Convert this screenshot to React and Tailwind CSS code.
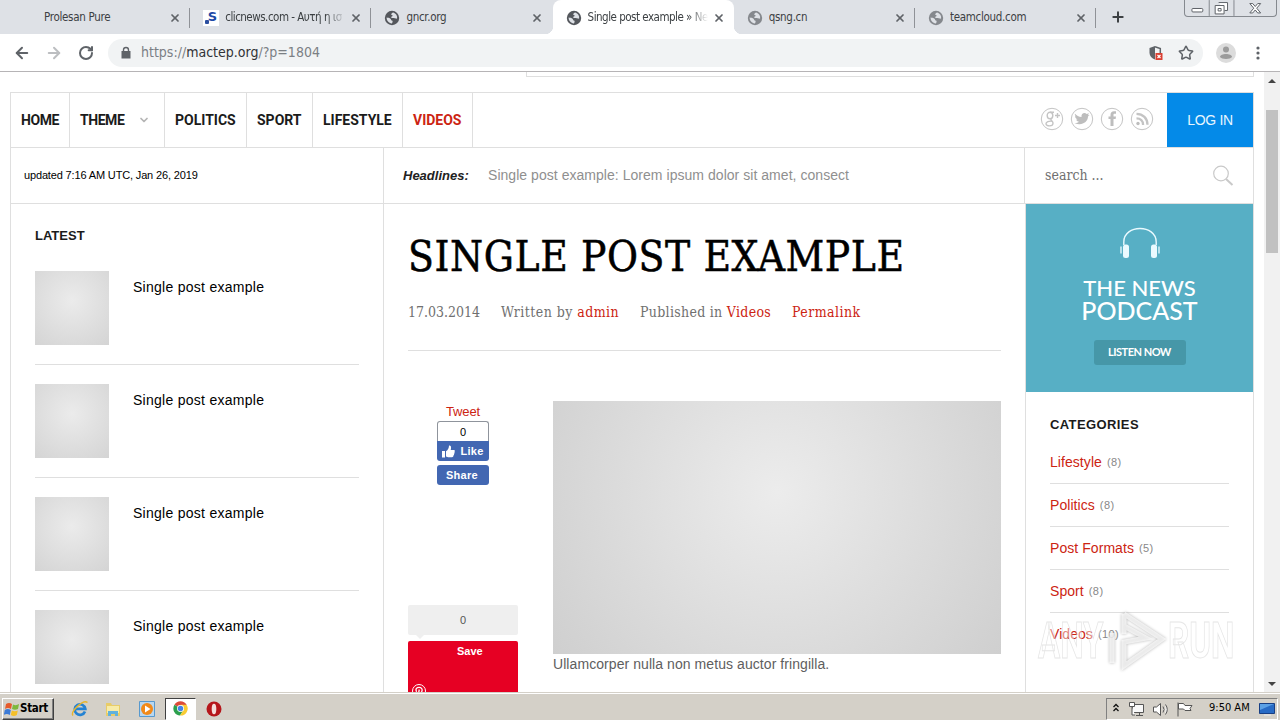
import React from 'react';
import { ArrowLeft, ArrowRight, RotateCw, Star, Plus, X, ChevronDown } from 'lucide-react';

const tabs = [
  { title: 'Prolesan Pure', icon: null },
  { title: 'clicnews.com - Αυτή η ισ', icon: 'letter', fade: true },
  { title: 'gncr.org', icon: 'globe' },
  { title: 'Single post example » Ne', icon: 'globe', active: true, fade: true },
  { title: 'qsng.cn', icon: 'globe', dim: true },
  { title: 'teamcloud.com', icon: 'globe', dim: true },
];

const navItems = [
  { label: 'HOME', width: 'w-[59px]', tight: true },
  { label: 'THEME', width: 'w-[95px]', menu: true, tight: true },
  { label: 'POLITICS', width: 'w-[82px]' },
  { label: 'SPORT', width: 'w-[66px]' },
  { label: 'LIFESTYLE', width: 'w-[90px]' },
  { label: 'VIDEOS', width: 'w-[70px]', active: true },
];

const categories = [
  { name: 'Lifestyle', count: 8 },
  { name: 'Politics', count: 8 },
  { name: 'Post Formats', count: 5 },
  { name: 'Sport', count: 8 },
  { name: 'Videos', count: 10 },
];

const Globe = ({ dim }) => (
  <svg viewBox="0 0 16 16" className={`size-4 shrink-0 ${dim ? 'text-[#85888d]' : 'text-[#54575c]'}`}>
    <circle cx="8" cy="8" r="7.2" fill="currentColor" />
    <path d="M2.6 7.6c1.5.2 3 .3 3.900 1.200.8.8.2 1.500 1.300 1.700 1.200.2 1 1.700.1 2.900-3 .1-5.300-2.600-5.300-5.800zM9.300 2.600c-1.200.4-2 .9-1.900 1.800.1.700 1.200.5 1.200 1.300 0 .9-1.500.6-1.500 1.500 0 .8 1.700.7 2.900.8 1.300.1 1.500 1 3.100.6.500-2.800-1.200-5.200-3.800-6z" fill="#dee1e6" />
  </svg>
);

const SiteIcon = ({ tab }) => {
  if (tab.icon === 'globe') return <Globe dim={tab.dim} />;
  if (tab.icon === 'letter') {
    return (
      <span className="flex size-4 shrink-0 items-start justify-end bg-white bg-[radial-gradient(circle_at_4px_12px,#2c4fa0_2px,transparent_2.500px)] pr-0.5 font-['DejaVu_Sans'] text-[13px] leading-[13px] font-bold text-[#1d49a6]">
        S
      </span>
    );
  }
  return <span className="size-4 shrink-0" />;
};

const TabStrip = () => (
  <div className="flex h-[34px] bg-[#dee1e6] pl-[9px] font-['DejaVu_Sans_Condensed','DejaVu_Sans',sans-serif] text-[11.500px] text-[#3c4043]">
    {tabs.map((tab, index) => (
      <div
        key={tab.title}
        className={`relative flex w-[181.200px] shrink-0 items-center pt-0.5 pl-[13px] ${tab.active ? 'rounded-t-lg bg-white' : ''}`}
      >
        {tab.active && (
          <>
            <span className="absolute bottom-0 -left-2 size-2 bg-[radial-gradient(circle_at_0_0,transparent_8px,white_8.500px)]" />
            <span className="absolute -right-2 bottom-0 size-2 bg-[radial-gradient(circle_at_100%_0,transparent_8px,white_8.500px)]" />
          </>
        )}
        <SiteIcon tab={tab} />
        <span
          className={`ml-1.5 w-[120px] overflow-hidden whitespace-nowrap ${
            tab.fade ? 'tracking-[-0.500px] [mask-image:linear-gradient(to_right,black_84%,transparent)]' : 'tracking-[-0.300px]'
          }`}
        >
          {tab.title}
        </span>
        <X className="ml-[5px] size-3 text-[#5f6368]" strokeWidth={3.5} />
        {index !== 2 && index !== 3 && <span className="ml-auto h-5 w-px bg-[#8f9297]" />}
      </div>
    ))}
    <Plus className="mt-[9px] ml-[14px] size-4 text-[#3c4043]" strokeWidth={3} />
    <div className="ml-auto mr-[3px] flex h-[17px] w-[93px] rounded-b-sm border border-t-0 border-[#85898f]">
      <svg viewBox="0 0 92 16" className="h-4 w-[92px]" fill="none" stroke="#5d6167">
        <path d="M24.500 0v16M49.500 0v16" stroke="#85898f" />
        <rect x="7" y="8.500" width="11" height="3.500" rx="1" fill="#fff" />
        <path d="M34 2.500h9v8h-3M30.500 5.500h9v8.500h-9zM33.500 8.500h3v2.500h-3z" fill="#fff" />
        <path d="M65.500 3.500h3l2.500 3 2.500-3h3l-4 4.700 4 4.800h-3l-2.500-3-2.500 3h-3l4-4.800z" fill="#fff" />
      </svg>
    </div>
  </div>
);

const Toolbar = () => (
  <div className="flex h-[38px] items-center border-b border-[#b6b4b6] bg-white pl-[13px]">
    <ArrowLeft className="size-[18px] text-[#5f6368]" strokeWidth={2.6} />
    <ArrowRight className="ml-[14px] size-[18px] text-[#bcbec1]" strokeWidth={2.6} />
    <RotateCw className="ml-[15px] size-4 text-[#5f6368]" strokeWidth={3} />
    <div className="ml-[14px] flex h-7 w-[1095px] items-center rounded-full bg-[#f1f3f4] pl-3">
      <svg viewBox="0 0 12 14" className="h-3.5 w-3" fill="none">
        <path d="M1.500 5h9v7.500h-9z" fill="#5f6368" />
        <path d="M3.500 5.500V4a2.500 2.500 0 0 1 5 0v1.500" stroke="#5f6368" strokeWidth="1.400" />
      </svg>
      <span className="ml-[9px] font-['DejaVu_Sans_Condensed','DejaVu_Sans',sans-serif] text-[14px] font-light text-[#7b7f84]">
        https://<span className="text-[#303236]">mactep.org</span>/?p=1804
      </span>
      <svg viewBox="0 0 16 16" className="ml-auto size-4">
        <path d="M7 1 1.500 3v4.500C1.500 11 4 13.500 7 14.500z" fill="#5f6368" />
        <path d="M7 1.700 12.300 3.500v5" fill="none" stroke="#5f6368" strokeWidth="1.500" />
        <path d="M7.500 8h7v7h-7z" fill="#d93f32" />
        <path d="m9.500 10 3 3m0-3-3 3" stroke="#fff" strokeWidth="1.200" />
      </svg>
      <Star className="mr-[9px] ml-[14px] size-4 text-[#5f6368]" strokeWidth={2.3} />
    </div>
    <svg viewBox="0 0 20 20" className="ml-[13px] size-5">
      <circle cx="10" cy="10" r="10" fill="#dcdcdc" />
      <circle cx="10" cy="6.500" r="3" fill="#9b9b9b" />
      <path d="M4 14c0-4 12-4 12 0-1.500 2.600-10.500 2.600-12 0z" fill="#9b9b9b" />
    </svg>
    <svg viewBox="0 0 4 16" className="ml-5 h-4 w-1" fill="#5f6368">
      <circle cx="2" cy="3" r="1.600" />
      <circle cx="2" cy="8" r="1.600" />
      <circle cx="2" cy="13" r="1.600" />
    </svg>
  </div>
);

const SocialIcon = ({ children }) => (
  <svg viewBox="0 0 24 24" className="size-6" fill="none" stroke="#c4c4c4">
    <circle cx="12" cy="12" r="10.700" />
    {children}
  </svg>
);

const SocialLinks = () => (
  <div className="ml-auto flex items-center gap-1.5 pr-[13px] pb-0.5">
    <SocialIcon>
      <ellipse cx="10" cy="8.500" rx="2.800" ry="3.300" strokeWidth="1.400" />
      <path d="M10 5.200h4M12 11c-3 2 1 2.500 1 5 0 4-7 3.500-7 .8 0-2.300 3-2.800 5.500-2.600M15 8.500h5M17.500 6v5" strokeWidth="1.400" />
    </SocialIcon>
    <SocialIcon>
      <path
        d="M5 6.800c1.700 2 3.800 3 6.500 3.200-.5-3.600 3.200-5 5.200-2.900l2.300-.8-1.100 1.900 1.700-.3-1.600 1.700c0 5.800-6.600 9.600-13.500 6.400 2 .1 3.400-.4 4.600-1.300-1.600-.2-2.500-1-2.900-2.300h1.300C6 11.700 5 10.600 5 9l1.300.4C5 8.600 4.600 7.800 5 6.800z"
        fill="#bdbdbd"
        stroke="none"
      />
    </SocialIcon>
    <SocialIcon>
      <path d="M10.500 19v-7H8.500V9.500h2V8c0-2.600 1.300-3.800 3.500-3.800h2v2.600h-1.300c-1 0-1.200.5-1.200 1.300v1.400H16l-.4 2.500h-2.100v7z" fill="#bdbdbd" stroke="none" />
    </SocialIcon>
    <SocialIcon>
      <circle cx="8" cy="16.500" r="1.700" fill="#bdbdbd" stroke="none" />
      <path d="M6.500 11.300c4 0 6.600 2.700 6.600 6.700M6.500 6.800c6.500 0 11 4.500 11 11" strokeWidth="2.300" />
    </SocialIcon>
  </div>
);

const NavBar = () => (
  <div className="flex h-[55px] border-b border-[#dfdfdf] font-['Liberation_Sans',Arial,sans-serif]">
    {navItems.map((item) => (
      <div
        key={item.label}
        className={`flex items-center border-r border-[#dfdfdf] pl-2.5 font-['Roboto',sans-serif] text-[14px] font-bold ${item.width} ${
          item.tight ? 'tracking-[-0.450px]' : ''
        } ${item.active ? 'text-[#cc2412]' : 'text-[#1b1b1b]'}`}
      >
        {item.label}
        {item.menu && <ChevronDown className="ml-[14px] size-3 text-[#b5b5b5]" strokeWidth={3.5} />}
      </div>
    ))}
    <SocialLinks />
    <div className="flex h-[54px] w-[86px] items-center justify-center bg-[#048ae8] text-[14px] tracking-[-0.300px] text-[#e8f6ff]">LOG IN</div>
  </div>
);

const InfoBar = () => (
  <div className="flex h-14 items-center border-b border-[#dfdfdf] font-['Liberation_Sans',Arial,sans-serif]">
    <div className="flex h-full w-[373px] items-center border-r border-[#dfdfdf] pl-[13px] text-[11px] tracking-[-0.150px] text-black">
      updated 7:16 AM UTC, Jan 26, 2019
    </div>
    <div className="flex h-full w-[641px] items-center border-r border-[#dfdfdf] pl-[19px] text-[14px] text-[#8f8f8f]">
      <span className="w-[85px] text-[13px] font-bold text-[#222] italic">Headlines:</span>
      <span className="tracking-[0.040px]">Single post example: Lorem ipsum dolor sit amet, consect</span>
    </div>
    <div className="flex flex-1 items-center justify-between pr-[19px] pl-5 font-['DejaVu_Serif_Condensed','DejaVu_Serif',serif] text-[14px] text-[#707070]">
      search ...
      <svg viewBox="0 0 22 22" className="size-[22px]" fill="none" stroke="#c9c9c9">
        <circle cx="9" cy="8.500" r="7.300" strokeWidth="1.200" />
        <path d="m14 14 6.500 6" strokeWidth="2" />
      </svg>
    </div>
  </div>
);

const LatestPosts = () => (
  <aside className="w-[373px] shrink-0 border-r border-[#dfdfdf] px-6 pt-6 font-['Liberation_Sans',Arial,sans-serif]">
    <h3 className="h-[43px] text-[13px] leading-4 font-bold text-[#1b1b1b]">LATEST</h3>
    {[0, 1, 2, 3].map((i) => (
      <div key={i} className="mb-[19px] flex h-[94px] border-b border-[#dfdfdf]">
        <div className="size-[74px] bg-[radial-gradient(circle_at_50%_40%,#ebebeb,#d4d4d4)]" />
        <span className="ml-6 pt-1.5 text-[14px] leading-5 tracking-[0.270px] text-black">Single post example</span>
      </div>
    ))}
  </aside>
);

const ShareButtons = () => (
  <div className="flex w-[110px] flex-col items-center">
    <span className="h-5 pt-px text-[13px] leading-5 tracking-[-0.150px] text-[#cc2412]">Tweet</span>
    <div className="flex h-5 w-[52px] items-center justify-center rounded-t-[3px] border border-b-0 border-[#8f949c] pt-px text-[11px] text-black">
      0
    </div>
    <div className="flex h-5 w-[52px] items-center justify-center gap-[5px] rounded-b-[3px] bg-[#4267b2] text-[11px] font-bold tracking-[0.300px] text-white">
      <svg viewBox="0 0 13 13" className="size-[13px]" fill="#fff">
        <path d="M0 6h3v6.500H0zM4 6.200C6 5 7 3 7 .5c2-.3 2.500 1.500 1.700 4.500h3c1.300 0 1.500 1.300.7 2 .5.700.3 1.500-.4 1.900.3.700 0 1.300-.6 1.600.2 1-.4 1.700-1.400 1.700H7c-1.300 0-2-.4-3-.7z" />
      </svg>
      Like
    </div>
    <div className="mt-1 flex h-5 w-[52px] items-center justify-center rounded-[3px] bg-[#4267b2] pt-px pr-0.5 text-[11px] font-bold tracking-[0.300px] text-white">
      Share
    </div>
    <div className="relative mt-[120px] flex h-[30px] w-full items-center justify-center rounded-xs bg-[#efefef] text-[11px] text-[#555]">
      0
      <span className="absolute top-full left-2 border-x-[4px] border-t-[4px] border-x-transparent border-t-[#efefef]" />
    </div>
    <div className="mt-1.5 flex h-[62px] w-full flex-col justify-between rounded-xs bg-[#e60023] pt-1 pl-[3px] text-[11px] leading-3 font-bold text-white">
      <span className="pl-[46px]">Save</span>
      <svg viewBox="0 0 16 16" className="mb-[4px] size-4 shrink-0" fill="none" stroke="#fff">
        <circle cx="8" cy="8" r="6.500" />
        <path d="M5.600 8.800C4 5.800 6 4.300 8 4.300c2.300 0 3.500 1.500 3 3.500-.5 2.300-2.800 2.400-3.200 1M8.300 6.500 6.900 13" strokeWidth="1.300" />
      </svg>
    </div>
  </div>
);

const Post = () => (
  <article className="w-[642px] shrink-0 border-r border-[#dfdfdf] px-6 pt-[27px]">
    <h1 className="h-[50px] font-['DejaVu_Serif_Condensed','DejaVu_Serif',serif] text-[42px] leading-[51px] tracking-[0.600px] whitespace-nowrap text-black [-webkit-text-stroke:0.500px_black]">
      SINGLE POST EXAMPLE
    </h1>
    <div className="flex h-[70px] border-b border-[#dfdfdf] pt-[21px] font-['DejaVu_Serif_Condensed','DejaVu_Serif',serif] text-[14px] leading-5 tracking-[0.450px] whitespace-nowrap text-[#707070]">
      <span className="w-[93px] tracking-normal">17.03.2014</span>
      <span className="w-[139px]">
        Written by <span className="text-[#cc2412]">admin</span>
      </span>
      <span className="w-[152px] tracking-[0.300px]">
        Published in <span className="text-[#cc2412]">Videos</span>
      </span>
      <span className="text-[#cc2412]">Permalink</span>
    </div>
    <div className="flex pt-[50px] font-['Liberation_Sans',Arial,sans-serif]">
      <ShareButtons />
      <div className="ml-[35px] w-[448px]">
        <div className="h-[253px] bg-[radial-gradient(circle_at_50%_36%,#ececec,#cfcfcf)]" />
        <p className="text-[14px] leading-5 tracking-[0.070px] text-[#5e5e5e]">Ullamcorper nulla non metus auctor fringilla.</p>
      </div>
    </div>
  </article>
);

const Podcast = () => (
  <div className="flex h-[188px] flex-col items-center bg-[#57afc5] pt-[23px] font-['Lato',sans-serif] text-white">
    <svg viewBox="0 0 40 32" className="h-8 w-10" fill="none" stroke="#eafaff">
      <path d="M3.800 18V15C3.800-3 36.200-3 36.200 15v3" strokeWidth="1.400" />
      <path d="M1 19.500v7M39 19.500v7" strokeWidth="1.300" />
      <rect x="3" y="17.500" width="6" height="13.500" rx="2.500" fill="#eafaff" stroke="none" />
      <rect x="31" y="17.500" width="6" height="13.500" rx="2.500" fill="#eafaff" stroke="none" />
    </svg>
    <span className="mt-[18px] text-[22px] leading-[22px] font-medium whitespace-nowrap">THE NEWS</span>
    <span className="text-[25px] leading-[22px] font-medium whitespace-nowrap">PODCAST</span>
    <span className="mt-[19px] flex h-[25px] w-[92px] items-center justify-center rounded-[3px] bg-[#4697a8] text-[11px] font-bold tracking-[-0.500px]">
      LISTEN NOW
    </span>
  </div>
);

const Sidebar = () => (
  <aside className="min-w-0 flex-1 font-['Liberation_Sans',Arial,sans-serif]">
    <Podcast />
    <div className="px-6 pt-[25px]">
      <h3 className="h-6 text-[13px] leading-4 font-bold tracking-[0.400px] text-[#1b1b1b]">CATEGORIES</h3>
      {categories.map((category) => (
        <div key={category.name} className="flex h-[43px] items-center border-b border-[#dfdfdf] text-[14px] tracking-[0.060px] text-[#cc2412] last:border-0">
          {category.name}
          <span className="ml-[5px] text-[11px] tracking-[0.400px] text-[#888]">({category.count})</span>
        </div>
      ))}
    </div>
  </aside>
);

const Watermark = () => (
  <div className="absolute top-[537px] left-[1038px] flex items-center font-['Roboto',sans-serif] text-[50px] leading-[64px] font-bold text-white/45 [-webkit-text-stroke:1px_rgba(190,190,190,0.4)]">
    <span className="w-[66px] origin-left scale-x-[0.660]">ANY</span>
    <svg viewBox="0 0 64 64" className="h-16 w-16 [filter:drop-shadow(0_0_1.500px_#999)]" fill="none" stroke="#fff" strokeOpacity="0.7" strokeWidth="5">
      <path d="M8 24v30M20 5v20M20 5l38 25-38 27V33l22-4-22-12" />
    </svg>
    <span className="w-[66px] origin-left scale-x-[0.660]">RUN</span>
  </div>
);

const ScrollBar = () => (
  <div className="flex w-4 flex-col items-center justify-between bg-[#f1f1f1] pt-[7px] pb-1.5">
    <span className="border-x-4 border-b-4 border-x-transparent border-b-[#444]" />
    <span className="mt-[27px] mb-auto h-[143px] w-3 bg-[#c1c1c1]" />
    <span className="border-x-4 border-t-4 border-x-transparent border-t-[#444]" />
  </div>
);

const TaskBar = () => (
  <div className="flex h-7 items-center border-t border-[#d4d0c8] bg-[#d4d0c8] pl-0.5 shadow-[inset_0_1px_0_#fff] font-['DejaVu_Sans_Condensed','DejaVu_Sans',sans-serif]">
    <div className="mt-1 flex h-[22px] w-[52px] items-center border border-t-white border-r-[#404040] border-b-[#404040] border-l-white pl-px text-[11.500px] font-bold text-black shadow-[inset_-1px_-1px_0_#808080]">
      <svg viewBox="0 0 16 16" className="size-4 shrink-0">
        <path d="M2 3q3-2 6 0L7 8Q4 6 1 8z" fill="#e65a2b" />
        <path d="M9 3.500q3 1.500 6-.5l-1 5q-3 1.500-6 0z" fill="#7db83c" />
        <path d="M.8 9q3-2 6 0l-1 5q-3-2-6 0z" fill="#3d7bd6" />
        <path d="M7.800 9.500q3 1.500 6 0l-1 4.500q-3 2-6 0z" fill="#f4bf29" />
      </svg>
      <span className="tracking-[-0.300px]">Start</span>
    </div>
    <div className="mt-1 ml-[17px] flex items-center">
      <svg viewBox="0 0 18 18" className="size-[18px]" fill="none">
        <path d="M14 11.500a5.300 5.300 0 1 1 .3-2.700H5" stroke="#2583d3" strokeWidth="2.700" />
        <path d="M2 15.500C-1 12 12-1 16.500 2.500" stroke="#e7b52c" strokeWidth="1.400" />
      </svg>
      <svg viewBox="0 0 18 18" className="ml-[15px] size-[18px]">
        <path d="M2 3h5l1 2h8v11H2z" fill="#e8cc68" />
        <path d="M3 6h12v7H3z" fill="#f7eba8" />
        <path d="M4 16v-5h10v5h-3v-2H7v2z" fill="#60b1dc" />
      </svg>
      <svg viewBox="0 0 18 18" className="ml-4 size-[18px]">
        <path d="M1.500 1.500h15v15h-15z" fill="#b8d7f0" stroke="#5799ce" />
        <circle cx="9" cy="9" r="6" fill="#f28a19" />
        <path d="m7 5.500 5.500 3.500L7 12.500z" fill="#fff" />
      </svg>
      <div className="ml-[9px] flex h-[22px] w-[31px] items-center justify-center border border-t-[#404040] border-r-white border-b-white border-l-[#404040] bg-white">
        <svg viewBox="0 0 16 16" className="size-[15px]">
          <path d="M8 8 1.500 4a7.500 7.500 0 0 1 13 0z" fill="#dd4b39" />
          <path d="M8 8 1.500 4A7.500 7.500 0 0 0 7.500 15.500L11 10z" fill="#2da04e" />
          <path d="M8 4h6.500a7.500 7.500 0 0 1-7 11.500L11.500 9z" fill="#f8cc35" />
          <circle cx="8" cy="8" r="3.700" fill="#fff" />
          <circle cx="8" cy="8" r="2.900" fill="#4384e8" />
        </svg>
      </div>
      <svg viewBox="0 0 16 16" className="ml-2.5 size-4">
        <circle cx="8" cy="8" r="7.500" fill="#b5161b" />
        <ellipse cx="8" cy="8" rx="2.300" ry="5.300" fill="#f4dedc" />
      </svg>
    </div>
    <div className="mt-1 mr-0.5 ml-auto flex h-[22px] w-[172px] items-center border border-t-[#808080] border-r-white border-b-white border-l-[#808080] pl-1.5 text-[11px] text-black">
      <svg viewBox="0 0 84 18" className="h-[18px] w-[84px] shrink-0" fill="none" stroke="#555">
        <path d="m.5 7 2.500-2.500L5.500 7m-5 4L3 8.500 5.500 11" stroke="#111" strokeWidth="1.300" />
        <path d="M19.500 4.500h11v8h-11zM23 15.500h7M26.500 13v2" fill="#f8f8f8" />
        <path d="M16.500 2.500h5v4h-5zM19 7v8h3" fill="#fff" />
        <path d="M40.500 7h3l4-3.500v12l-4-3.500h-3zM50 6.500q2 3 0 6M52.500 4.500q3.500 5 0 10" fill="#fff" />
        <path d="M65 2.500v14M65.500 3.500h5l1.500 2h7l-2 3 1 2h-6l-1.500-1.500h-5z" fill="#fff" />
      </svg>
      <span className="ml-3 whitespace-nowrap">9:50 AM</span>
      <svg viewBox="0 0 16 14" className="mr-0.5 ml-auto h-3.5 w-4 shrink-0">
        <path d="M.5 1.500h15v10H.5z" fill="#286bc5" stroke="#183f84" />
        <path d="M1 2h14L1 8z" fill="#5ca1e5" />
        <path d="M5 13h7" stroke="#eee" />
      </svg>
    </div>
  </div>
);

const App = () => (
  <div className="flex h-[720px] w-[1280px] flex-col overflow-hidden bg-white">
    <TabStrip />
    <Toolbar />
    <div className="relative flex h-[620px] overflow-hidden">
      <main className="w-[1264px] pr-2.5 pl-2.5">
        <div className="ml-auto h-[5px] w-[728px] border border-t-0 border-[#dfdfdf]" />
        <div className="mt-[15px] border border-b-0 border-[#dfdfdf]">
          <NavBar />
          <InfoBar />
          <div className="flex h-[520px]">
            <LatestPosts />
            <Post />
            <Sidebar />
          </div>
        </div>
      </main>
      <ScrollBar />
      <Watermark />
    </div>
    <TaskBar />
  </div>
);

export default App;
